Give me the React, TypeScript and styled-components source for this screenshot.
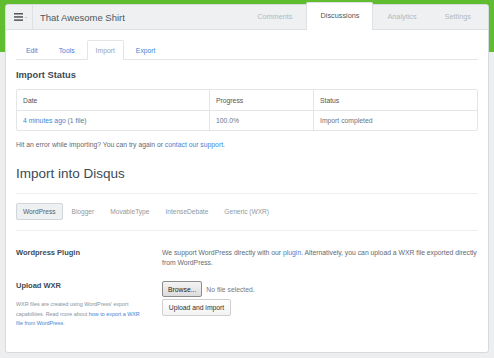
import React from "react";
import styled, { createGlobalStyle, css } from "styled-components";

const Global = createGlobalStyle`
  html, body { margin: 0; padding: 0; }
  body {
    font-family: "Liberation Sans", Arial, sans-serif;
    background: #eceef0;
  }
  * { box-sizing: border-box; }
`;

const Page = styled.div`
  width: 494px;
  height: 358px;
  padding: 4px 5px 5px 5px;
  background: linear-gradient(#5fbd2f 0, #5fbd2f 52px, #eceef0 52px);
`;

const Card = styled.div`
  height: 349px;
  background: #fff;
  border: 1px solid #d6dbdf;
  border-radius: 3px;
  display: flex;
  flex-direction: column;
`;

const Header = styled.div`
  height: 25px;
  display: flex;
  align-items: stretch;
  background: #eef0f2;
  border-bottom: 1px solid #dde1e4;
  border-radius: 3px 3px 0 0;
`;

const MenuButton = styled.div`
  width: 27px;
  border-right: 1px solid #dde1e4;
  display: flex;
  align-items: center;
  justify-content: center;
  gap: 2px;
  padding-left: 2px;
`;

const Caret = styled.span`
  width: 0;
  height: 0;
  border-left: 1.5px solid transparent;
  border-right: 1.5px solid transparent;
  border-top: 1.5px solid #999;
  margin-top: 1px;
`;

const Title = styled.div`
  display: flex;
  align-items: center;
  padding-left: 7px;
  font-size: 9.5px;
  color: #4d5760;
`;

const Nav = styled.div`
  margin-left: auto;
  margin-right: 3px;
  display: flex;
  align-items: flex-end;
`;

const NavTab = styled.div<{ $active?: boolean }>`
  height: 25px;
  padding: 0 14px;
  display: flex;
  align-items: center;
  font-size: 7.3px;
  color: #b3bac0;
  ${(p) =>
    p.$active &&
    css`
      height: 28px;
      margin-bottom: -1px;
      padding: 0 13px 2px;
      background: #fff;
      border: 1px solid #dde1e4;
      border-bottom: none;
      border-radius: 2px 2px 0 0;
      color: #4d5760;
    `}
`;

const Content = styled.div`
  padding: 10px 10px 0 10px;
  display: flex;
  flex-direction: column;
`;

const SubTabs = styled.div`
  display: flex;
  gap: 3px;
  padding-left: 1px;
  border-bottom: 1px solid #e3e6e9;
`;

const SubTab = styled.div<{ $active?: boolean }>`
  height: 19px;
  padding: 0 8px;
  display: flex;
  align-items: center;
  font-size: 6.8px;
  color: #3b87d4;
  border: 1px solid transparent;
  border-bottom: none;
  ${(p) =>
    p.$active &&
    css`
      color: #9aa3ab;
      background: #fff;
      border-color: #e3e6e9;
      border-radius: 2px 2px 0 0;
      margin-bottom: -1px;
      height: 20px;
    `}
`;

const H3 = styled.div`
  margin-top: 9px;
  font-size: 9.3px;
  line-height: 12px;
  font-weight: bold;
  color: #3d4a55;
`;

const Table = styled.div`
  margin-top: 8px;
  border: 1px solid #e3e6e9;
  border-radius: 2px;
  display: grid;
  grid-template-columns: 192px 104px 1fr;
`;

const Cell = styled.div<{ $head?: boolean; $first?: boolean }>`
  height: 20px;
  padding: 0 6px;
  display: flex;
  align-items: center;
  font-size: 6.8px;
  color: ${(p) => (p.$head ? "#4a5662" : "#6b7680")};
  border-left: ${(p) => (p.$first ? "none" : "1px solid #e3e6e9")};
  border-top: ${(p) => (p.$head ? "none" : "1px solid #e3e6e9")};
`;

const Link = styled.span`
  color: #3b87d4;
`;

const Paragraph = styled.div`
  margin-top: 9px;
  font-size: 6.8px;
  line-height: 10px;
  color: #5f6a74;
`;

const H2 = styled.div`
  margin-top: 16px;
  font-size: 13.5px;
  line-height: 16px;
  color: #3d4a55;
  padding-bottom: 11px;
  border-bottom: 1px solid #eceef0;
`;

const Platforms = styled.div`
  display: flex;
  gap: 2px;
  padding: 9px 0 10px;
  border-bottom: 1px solid #eceef0;
`;

const Platform = styled.div<{ $active?: boolean }>`
  height: 17px;
  padding: 0 6px;
  display: flex;
  align-items: center;
  font-size: 6.6px;
  color: #8f989f;
  border: 1px solid transparent;
  border-radius: 2px;
  ${(p) =>
    p.$active &&
    css`
      background: #eef0f2;
      border-color: #cfd5da;
      color: #55606a;
    `}
`;

const FormGrid = styled.div`
  display: grid;
  grid-template-columns: 146px 1fr;
  row-gap: 13px;
  padding-top: 17px;
`;

const Label = styled.div`
  font-size: 7.5px;
  line-height: 10px;
  font-weight: bold;
  color: #3d4a55;
`;

const Help = styled.div`
  margin-top: 9px;
  max-width: 131px;
  font-size: 5.4px;
  line-height: 9.5px;
  color: #8a939b;
`;

const Text = styled.div`
  font-size: 6.8px;
  line-height: 10px;
  color: #5f6a74;
`;

const FileRow = styled.div`
  display: flex;
  align-items: center;
  gap: 4px;
`;

const BrowseButton = styled.div`
  height: 16px;
  padding: 0 5px;
  display: flex;
  align-items: center;
  font-size: 6.8px;
  color: #222;
  background: linear-gradient(#f4f4f4, #dcdcdc);
  border: 1px solid #8c8c8c;
  border-radius: 2px;
`;

const NoFile = styled.span`
  font-size: 6.8px;
  color: #7a7a7a;
`;

const Button = styled.div`
  margin-top: 2px;
  width: 69px;
  height: 17px;
  display: flex;
  align-items: center;
  justify-content: center;
  font-size: 6.8px;
  color: #333;
  background: linear-gradient(#ffffff, #f3f3f3);
  border: 1px solid #cfcfcf;
  border-radius: 2px;
`;

const HamburgerIcon = () => (
  <svg width="9" height="8" viewBox="0 0 9 8">
    <rect x="0" y="0" width="9" height="1.5" fill="#555" />
    <rect x="0" y="3.2" width="9" height="1.5" fill="#555" />
    <rect x="0" y="6.4" width="9" height="1.5" fill="#555" />
  </svg>
);

export default function App() {
  return (
    <>
      <Global />
      <Page>
        <Card>
          <Header>
            <MenuButton>
              <HamburgerIcon />
              <Caret />
            </MenuButton>
            <Title>That Awesome Shirt</Title>
            <Nav>
              <NavTab>Comments</NavTab>
              <NavTab $active>Discussions</NavTab>
              <NavTab>Analytics</NavTab>
              <NavTab>Settings</NavTab>
            </Nav>
          </Header>
          <Content>
            <SubTabs>
              <SubTab>Edit</SubTab>
              <SubTab>Tools</SubTab>
              <SubTab $active>Import</SubTab>
              <SubTab>Export</SubTab>
            </SubTabs>

            <H3>Import Status</H3>
            <Table>
              <Cell $head $first>Date</Cell>
              <Cell $head>Progress</Cell>
              <Cell $head>Status</Cell>
              <Cell $first>
                <Link>4 minutes ago</Link>&nbsp;(1 file)
              </Cell>
              <Cell>100.0%</Cell>
              <Cell>Import completed</Cell>
            </Table>
            <Paragraph>
              Hit an error while importing? You can try again or <Link>contact our support</Link>.
            </Paragraph>

            <H2>Import into Disqus</H2>
            <Platforms>
              <Platform $active>WordPress</Platform>
              <Platform>Blogger</Platform>
              <Platform>MovableType</Platform>
              <Platform>IntenseDebate</Platform>
              <Platform>Generic (WXR)</Platform>
            </Platforms>

            <FormGrid>
              <Label>Wordpress Plugin</Label>
              <Text>
                We support WordPress directly with our <Link>plugin</Link>. Alternatively, you can upload a WXR
                file exported directly from WordPress.
              </Text>
              <div>
                <Label>Upload WXR</Label>
                <Help>
                  WXR files are created using WordPress' export capabilities. Read more about{" "}
                  <Link>how to export a WXR file from WordPress</Link>.
                </Help>
              </div>
              <div>
                <FileRow>
                  <BrowseButton>Browse...</BrowseButton>
                  <NoFile>No file selected.</NoFile>
                </FileRow>
                <Button>Upload and import</Button>
              </div>
            </FormGrid>
          </Content>
        </Card>
      </Page>
    </>
  );
}
